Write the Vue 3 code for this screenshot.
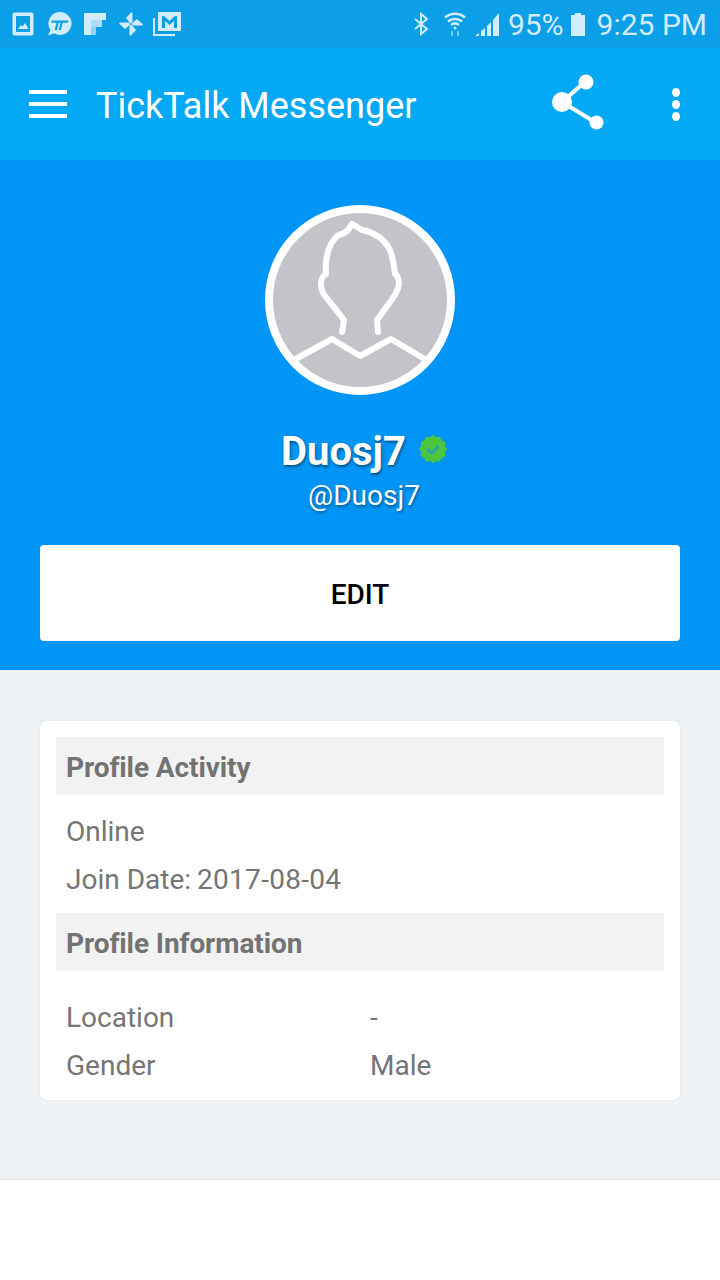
<script setup>
const activity = [
  { label: 'Online', value: '' },
  { label: 'Join Date: ', value: '2017-08-04' }
]
const info = [
  { label: 'Location', value: '-' },
  { label: 'Gender', value: 'Male' }
]
</script>

<template>
  <div class="page">
    <div class="status">
      <div class="status-left">
        <svg width="22" height="24" viewBox="0 0 22 24"><rect x="0.500" y="0.500" width="21" height="23" rx="2" fill="#d2ecfb"/><rect x="4" y="4" width="14" height="16" fill="#0b9fe8"/><path d="M6 17l3-4 1.500 1.500L13 11l3.500 6z" fill="#d2ecfb"/></svg>
        <svg class="tt" width="25" height="26" viewBox="0 0 25 26"><path d="M13 1a11.500 11.500 0 1 1-6 21.300L1 24.500l2.500-5.500A11.500 11.500 0 0 1 13 1z" fill="#d2ecfb"/><path d="M4.500 9.500h17l-.8 2.300h-5l-1.800 7.200h-2.200l1.800-7.200h-1.800l-1.800 7.200H7.700l1.800-7.200H4.500z" fill="#0b9fe8"/></svg>
        <svg width="22" height="22" viewBox="0 0 22 22"><path d="M0 0h22v7H7v15H0z" fill="#d2ecfb"/><path d="M7 7h11v7H7z" fill="#aadcf7"/><path d="M7 14h5v8H7z" fill="#8fd2f4"/></svg>
        <svg width="24" height="24" viewBox="0 0 24 24" fill="#d2ecfb"><path d="M11.500 11.500L7 6l5.500-6 1 1v9z"/><path d="M11.500 11.500L7 6l5.500-6 1 1v9z" transform="rotate(90 12 12)"/><path d="M11.500 11.500L7 6l5.500-6 1 1v9z" transform="rotate(180 12 12)"/><path d="M11.500 11.500L7 6l5.500-6 1 1v9z" transform="rotate(270 12 12)"/></svg>
        <svg class="mail" width="28" height="24" viewBox="0 0 28 24"><path d="M1 6v17h21" fill="none" stroke="#d2ecfb" stroke-width="2"/><rect x="5" y="0" width="23" height="19" rx="1" fill="#d2ecfb"/><path d="M9 16V4h2l5.500 5L22 4h2v12h-3V9l-4.500 4L12 9v7z" fill="#0b9fe8"/></svg>
      </div>
      <div class="status-right">
        <svg class="bt" width="16" height="24" viewBox="0 0 16 24"><path d="M2 7l12 10-6 5V2l6 5L2 17" fill="none" stroke="#d2ecfb" stroke-width="2"/></svg>
        <svg class="wifi" width="24" height="26" viewBox="0 0 24 26" fill="none" stroke="#d2ecfb" stroke-width="2.500"><path d="M2 6.500c6-5 14-5 20 0M5 10.500c4-3.500 10-3.500 14 0M8 14c2.500-2 5.500-2 8 0"/><circle cx="12" cy="17" r="1.500" fill="#d2ecfb" stroke="none"/><path d="M9 25v-5M15 25v-5" stroke="#7fcbf2" stroke-width="2"/></svg>
        <svg class="signal" width="26" height="26" viewBox="0 0 26 26" fill="#d2ecfb"><path d="M1 25l4-3v3zM7 25v-5l4-3v8zM13 25V15l4-4v14zM19 25V9l6-7v23z"/></svg>
        <span class="pct">95%</span>
        <svg class="batt" width="16" height="24" viewBox="0 0 16 24"><path d="M5 1h6v2h4v21H1V3h4z" fill="#d2ecfb"/></svg>
        <span class="time">9:25 PM</span>
      </div>
    </div>

    <header class="bar">
      <div class="burger"><i></i><i></i><i></i></div>
      <span class="title">TickTalk Messenger</span>
      <svg class="share" width="56" height="64" viewBox="0 0 56 64">
        <path d="M35 9L11 30l36 22" fill="none" stroke="#fff" stroke-width="4"/>
        <circle cx="35" cy="10" r="7.500" fill="#fff"/>
        <circle cx="11" cy="30" r="10" fill="#fff"/>
        <circle cx="45.500" cy="50.500" r="7" fill="#fff"/>
      </svg>
      <div class="dots"><i></i><i></i><i></i></div>
    </header>

    <section class="hero">
      <div class="avatar">
        <svg width="190" height="190" viewBox="0 0 190 190">
          <circle cx="95" cy="95" r="91" fill="#c3c4ca" stroke="#fff" stroke-width="8"/>
          <path d="M77 127L79 115L65 97C60 91 56 87 56 80C56 74 57 71 61 69C60 58 62 44 68 36C71 31 75 29 79 28L83 25L87 19L97 25C108 27 118 33 124 43C128 51 129 60 130 69C133 71 134 75 134 79C133 86 129 92 125 97L112 115L113 127" fill="none" stroke="#fff" stroke-width="6" stroke-linecap="round" stroke-linejoin="round"/>
          <path d="M27 156L67 134L95 151L126 134L163 156" fill="none" stroke="#fff" stroke-width="6" stroke-linejoin="round"/>
        </svg>
      </div>
      <div class="name-row">
        <span class="name">Duosj7</span>
        <svg class="verified" width="30" height="30" viewBox="0 0 32 32">
          <path d="M16 1l3.400 2.500 4.200-.5 1.700 3.900 3.900 1.700-.5 4.200L31 16l-2.300 3.400.5 4.200-3.900 1.700-1.700 3.900-4.200-.5L16 31l-3.400-2.300-4.200.5-1.700-3.900-3.900-1.700.5-4.200L1 16l2.300-3.400-.5-4.200 3.900-1.700 1.700-3.900 4.200.5z" fill="#4cc63f"/>
          <path d="M10 16l4.500 4.500L22 13" fill="none" stroke="#2f9fb0" stroke-width="3"/>
        </svg>
      </div>
      <div class="handle">@Duosj7</div>
      <button class="edit">EDIT</button>
    </section>

    <section class="content">
      <div class="card">
        <div class="card-head">Profile Activity</div>
        <div class="list">
          <div v-for="line in activity" :key="line.label" class="row">{{ line.label }}<span class="date">{{ line.value }}</span></div>
        </div>
        <div class="card-head">Profile Information</div>
        <div class="list info">
          <div v-for="item in info" :key="item.label" class="row pair">
            <span class="label">{{ item.label }}</span>
            <span>{{ item.value }}</span>
          </div>
        </div>
      </div>
    </section>

    <div class="foot"></div>
  </div>
</template>

<style>
html, body { margin: 0; background: #fff; }
</style>

<style scoped>
.page { width: 720px; height: 1280px; overflow: hidden; font-family: Roboto, "Liberation Sans", sans-serif; background: #fff; }
.status { height: 48px; background: #0b9fe8; display: flex; justify-content: space-between; align-items: center; padding: 0 13px 0 12px; box-sizing: border-box; }
.status-left { display: flex; align-items: center; gap: 13px; }
.tt { margin-right: -1px; }
.mail { margin-left: -3px; }
.status-right { display: flex; align-items: center; color: #d2ecfb; font-size: 30px; }
.bt { margin-right: 14px; }
.wifi { margin-right: 7px; }
.signal { margin-right: 8px; }
.batt { margin: 0 11px 0 6px; }
.bar { height: 112px; background: #03a9f4; display: flex; align-items: center; color: #fff; }
.burger { width: 38px; margin-left: 29px; display: flex; flex-direction: column; gap: 8px; }
.burger i { display: block; height: 4px; background: #fff; }
.title { font-size: 36px; margin-left: 29px; padding-top: 4px; flex: 1; }
.share { margin-right: 65px; }
.dots { display: flex; flex-direction: column; gap: 3px; margin-right: 40px; }
.dots i { display: block; width: 8px; height: 9px; border-radius: 50%; background: #fff; }
.hero { height: 510px; background: #0095f6; display: flex; flex-direction: column; align-items: center; padding-top: 45px; box-sizing: border-box; }
.avatar { width: 190px; height: 190px; }
.avatar svg { display: block; }
.name-row { display: flex; align-items: center; margin-top: 33px; height: 46px; gap: 12px; padding-left: 9px; }
.name { font-size: 40px; font-weight: 700; color: #fff; text-shadow: 1px 2px 3px rgba(0,0,0,.45); }
.verified { margin-top: -4px; }
.handle { font-size: 28px; color: #fff; margin-top: 2px; line-height: 40px; padding-left: 8px; text-shadow: 1px 2px 3px rgba(0,0,0,.4); }
.edit { width: 640px; height: 96px; margin-top: 29px; padding: 2px 0 0; border: 0; border-radius: 4px; background: #fff; color: #000; font: 500 28px Roboto, sans-serif; }
.content { height: 510px; background: #eef2f5; padding: 51px 40px 0; box-sizing: border-box; border-bottom: 1px solid #e2e5e8; }
.card { height: 379px; background: #fff; border-radius: 6px; padding: 16px; box-sizing: border-box; box-shadow: 0 0 1px rgba(0,0,0,.2); }
.card-head { height: 58px; line-height: 62px; background: #f2f2f2; padding-left: 10px; font-size: 28px; font-weight: 700; color: #737373; letter-spacing: -0.1px; }
.list { padding: 13px 10px 9px; font-size: 28px; color: #757575; }
.list.info { padding-top: 23px; }
.row { height: 48px; line-height: 48px; white-space: pre; }
.date { letter-spacing: 0.3px; margin-left: -1px; }
.pair { display: flex; }
.label { width: 304px; }
.foot { height: 100px; }
</style>
